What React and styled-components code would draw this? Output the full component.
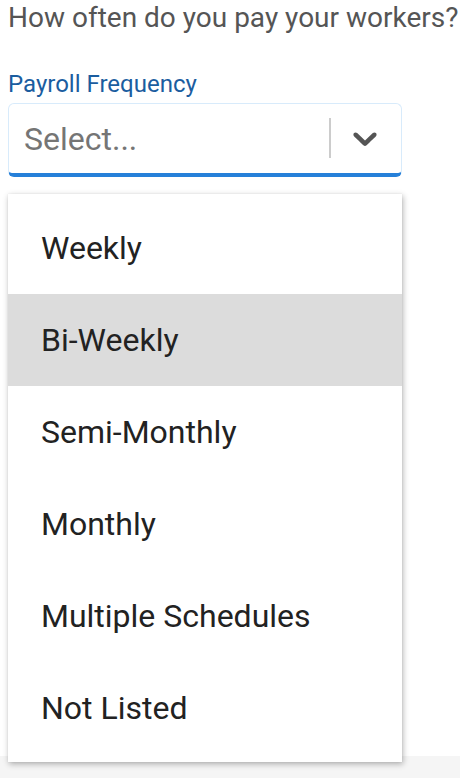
import React from "react"
import styled, { createGlobalStyle } from "styled-components"

const options = [
  "Weekly",
  "Bi-Weekly",
  "Semi-Monthly",
  "Monthly",
  "Multiple Schedules",
  "Not Listed",
]

export default function App() {
  return (
    <>
      <GlobalStyle />
      <Page>
        <Content>
          <Question>How often do you pay your workers?</Question>
          <Label>Payroll Frequency</Label>
          <SelectWrap>
            <Control>
              <Placeholder>Select...</Placeholder>
              <Indicators>
                <Separator />
                <Chevron viewBox="0 0 20 20" aria-hidden="true">
                  <path d="M4.516 7.548c0.436-0.446 1.043-0.481 1.576 0l3.908 3.747 3.908-3.747c0.533-0.481 1.141-0.446 1.574 0 0.436 0.445 0.408 1.197 0 1.615-0.406 0.418-4.695 4.502-4.695 4.502-0.217 0.223-0.502 0.335-0.787 0.335s-0.57-0.112-0.789-0.335c0 0-4.287-4.084-4.695-4.502s-0.436-1.17 0-1.615z" />
                </Chevron>
              </Indicators>
            </Control>
            <Menu>
              {options.map((o) => (
                <Option key={o} $focused={o === "Bi-Weekly"}>
                  {o}
                </Option>
              ))}
            </Menu>
          </SelectWrap>
        </Content>
        <Footer />
      </Page>
    </>
  )
}

const GlobalStyle = createGlobalStyle`
  body {
    margin: 0;
    background: #ffffff;
    font-family: Roboto, "Liberation Sans", sans-serif;
  }
`

const Page = styled.div`
  display: flex;
  flex-direction: column;
  min-height: 778px;
  overflow: hidden;
`

const Content = styled.main`
  height: 756px;
  padding: 0 8px;
  box-sizing: border-box;
`

const Footer = styled.footer`
  flex: 1;
  background: #f5f5f5;
`

const Question = styled.h2`
  margin: 0;
  font-size: 28px;
  font-weight: 400;
  line-height: 36px;
  color: #555555;
  white-space: nowrap;
`

const Label = styled.div`
  margin-top: 34px;
  font-size: 24px;
  line-height: 28px;
  color: #1b5d9f;
`

const SelectWrap = styled.div`
  position: relative;
  width: 394px;
  margin-top: 5px;
`

const Control = styled.div`
  display: flex;
  align-items: center;
  height: 74px;
  box-sizing: border-box;
  border: 1px solid #d8ebfb;
  border-bottom: 4px solid #2680d9;
  border-radius: 6px;
  padding-left: 15px;
  background: #ffffff;
`

const Placeholder = styled.span`
  flex: 1;
  font-size: 32px;
  color: #757575;
`

const Indicators = styled.div`
  display: flex;
  align-items: center;
  align-self: stretch;
`

const Separator = styled.span`
  width: 2px;
  height: 40px;
  background: #cccccc;
  margin-bottom: 2px;
`

const Chevron = styled.svg`
  width: 40px;
  height: 40px;
  margin: 0 16px 2px 14px;
  fill: #555555;
`

const Menu = styled.ul`
  position: absolute;
  top: 91px;
  left: 0;
  right: 0;
  margin: 0;
  padding: 8px 0;
  list-style: none;
  background: #ffffff;
  box-shadow: 1px 2px 6px rgba(0, 0, 0, 0.3), 0 0 1px rgba(0, 0, 0, 0.1);
  z-index: 2;
`

const Option = styled.li`
  display: flex;
  align-items: center;
  height: 92px;
  padding-left: 33px;
  font-size: 32px;
  color: #222222;
  background: ${(p) => (p.$focused ? "#dcdcdc" : "transparent")};
`
